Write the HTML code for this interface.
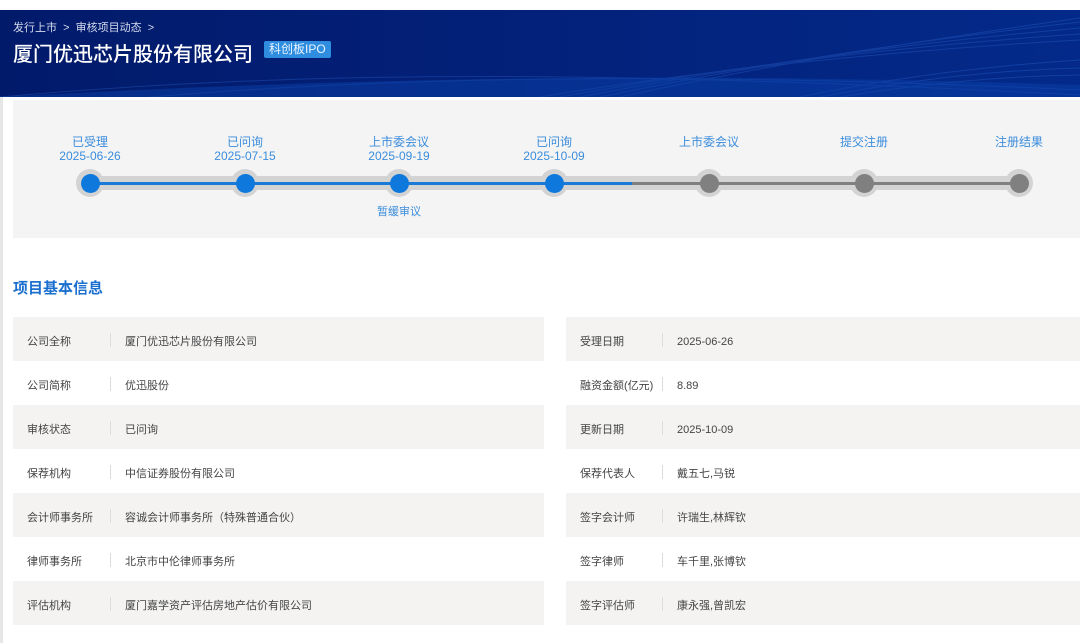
<!DOCTYPE html>
<html><head><meta charset="utf-8"><style>
*{margin:0;padding:0;box-sizing:border-box}
body{width:1080px;height:643px;overflow:hidden;background:#fff;font-family:"Liberation Sans","Noto Sans CJK SC",sans-serif;position:relative}
.hdr{position:absolute;left:0;top:10px;width:1080px;height:87px;background:linear-gradient(90deg,#021a6a 0%,#03217a 50%,#032a8a 100%);overflow:hidden}
.bc{position:absolute;left:13px;top:9px;color:#d6dcef;font-size:11px}
.tt{position:absolute;left:13px;top:28px;color:#fff;font-size:20px;font-weight:500}
.tag{position:absolute;left:264px;top:31px;background:#2f8de0;color:#eaf4ff;font-size:12px;padding:1px 5px;border-radius:2px;height:17px;line-height:15px}
.leftbar{position:absolute;left:0;top:97px;width:3px;height:546px;background:#e6e6e6}
.tl{position:absolute;left:13px;top:100px;width:1067px;height:138px;background:#f4f4f4}
.lb{position:absolute;color:#3b8ddc;font-size:12px;text-align:center;width:100px;line-height:14px}
.band{position:absolute;top:176px;height:14px;background:#d3d3d3}
.ring{position:absolute;width:28px;height:28px;border-radius:50%;background:#d3d3d3;top:169px}
.dot{position:absolute;width:19px;height:19px;border-radius:50%;top:173.5px}
h3{position:absolute;left:13px;top:277px;color:#1a6fcf;font-size:15px;font-weight:bold}
.row{position:absolute;height:44px;font-size:11px;color:#444}
.row span{position:absolute;top:3px;line-height:44px}
.row i{position:absolute;top:16px;width:1px;height:14px;background:#ddd}
.g{background:#f4f3f2}
</style></head><body>
<div class="hdr">
<svg width="1080" height="87" style="position:absolute;left:0;top:0">
<g fill="none" stroke="#2d66d0" stroke-width="1" opacity="0.35">
<path d="M0 87 C300 60 600 60 1080 85"/>
<path d="M150 87 C400 66 700 62 1080 80"/>
<path d="M540 87 C700 60 900 40 1080 30"/>
<path d="M560 87 C720 58 900 36 1080 24"/>
<path d="M580 87 C740 56 900 34 1080 18"/>
<path d="M600 87 C760 54 920 30 1080 12"/>
<path d="M620 87 C780 52 940 28 1080 8"/>
<path d="M800 87 C900 66 1000 55 1080 50"/>
<path d="M820 87 C920 68 1000 60 1080 58"/>
<path d="M840 87 C930 72 1010 66 1080 65"/>
</g>
<path d="M0 87 C300 70 650 60 1080 75 L1080 87 Z" fill="#0a3fa8" opacity="0.5"/>
</svg>
<div class="bc">发行上市 &nbsp;&gt;&nbsp; 审核项目动态 &nbsp;&gt;</div>
<div class="tt">厦门优迅芯片股份有限公司</div>
<div class="tag">科创板IPO</div>
</div>
<div class="leftbar"></div>
<div class="tl"></div>
<div class="band" style="left:90px;width:929px"></div>

<div class="ring" style="left:76px"></div>
<div class="ring" style="left:231px"></div>
<div class="ring" style="left:385px"></div>
<div class="ring" style="left:540px"></div>
<div class="ring" style="left:695px"></div>
<div class="ring" style="left:850px"></div>
<div class="ring" style="left:1005px"></div>
<div style="position:absolute;left:90px;top:181.5px;width:542px;height:3px;background:#1a7ad8"></div>
<div style="position:absolute;left:632px;top:181.5px;width:387px;height:3px;background:#808080"></div>
<div class="dot" style="left:80.5px;background:#0f78dc"></div>
<div class="dot" style="left:235.5px;background:#0f78dc"></div>
<div class="dot" style="left:389.5px;background:#0f78dc"></div>
<div class="dot" style="left:544.5px;background:#0f78dc"></div>
<div class="dot" style="left:699.5px;background:#808080"></div>
<div class="dot" style="left:854.5px;background:#808080"></div>
<div class="dot" style="left:1009.5px;background:#808080"></div>

<div class="lb" style="left:40px;top:135px">已受理<br>2025-06-26</div>
<div class="lb" style="left:195px;top:135px">已问询<br>2025-07-15</div>
<div class="lb" style="left:349px;top:135px">上市委会议<br>2025-09-19</div>
<div class="lb" style="left:504px;top:135px">已问询<br>2025-10-09</div>
<div class="lb" style="left:659px;top:135px">上市委会议</div>
<div class="lb" style="left:814px;top:135px">提交注册</div>
<div class="lb" style="left:969px;top:135px">注册结果</div>
<div class="lb" style="left:349px;top:205px;font-size:11px">暂缓审议</div>

<h3>项目基本信息</h3>

<div class="row g" style="left:13px;top:317px;width:531px"><span style="left:14px">公司全称</span><i style="left:97px"></i><span style="left:112px">厦门优迅芯片股份有限公司</span></div>
<div class="row g" style="left:566px;top:317px;width:514px"><span style="left:14px">受理日期</span><i style="left:96px"></i><span style="left:111px">2025-06-26</span></div>
<div class="row" style="left:13px;top:361px;width:531px"><span style="left:14px">公司简称</span><i style="left:97px"></i><span style="left:112px">优迅股份</span></div>
<div class="row" style="left:566px;top:361px;width:514px"><span style="left:14px">融资金额(亿元)</span><i style="left:96px"></i><span style="left:111px">8.89</span></div>
<div class="row g" style="left:13px;top:405px;width:531px"><span style="left:14px">审核状态</span><i style="left:97px"></i><span style="left:112px">已问询</span></div>
<div class="row g" style="left:566px;top:405px;width:514px"><span style="left:14px">更新日期</span><i style="left:96px"></i><span style="left:111px">2025-10-09</span></div>
<div class="row" style="left:13px;top:449px;width:531px"><span style="left:14px">保荐机构</span><i style="left:97px"></i><span style="left:112px">中信证券股份有限公司</span></div>
<div class="row" style="left:566px;top:449px;width:514px"><span style="left:14px">保荐代表人</span><i style="left:96px"></i><span style="left:111px">戴五七,马锐</span></div>
<div class="row g" style="left:13px;top:493px;width:531px"><span style="left:14px">会计师事务所</span><i style="left:97px"></i><span style="left:112px">容诚会计师事务所（特殊普通合伙）</span></div>
<div class="row g" style="left:566px;top:493px;width:514px"><span style="left:14px">签字会计师</span><i style="left:96px"></i><span style="left:111px">许瑞生,林辉钦</span></div>
<div class="row" style="left:13px;top:537px;width:531px"><span style="left:14px">律师事务所</span><i style="left:97px"></i><span style="left:112px">北京市中伦律师事务所</span></div>
<div class="row" style="left:566px;top:537px;width:514px"><span style="left:14px">签字律师</span><i style="left:96px"></i><span style="left:111px">车千里,张博钦</span></div>
<div class="row g" style="left:13px;top:581px;width:531px"><span style="left:14px">评估机构</span><i style="left:97px"></i><span style="left:112px">厦门嘉学资产评估房地产估价有限公司</span></div>
<div class="row g" style="left:566px;top:581px;width:514px"><span style="left:14px">签字评估师</span><i style="left:96px"></i><span style="left:111px">康永强,曾凯宏</span></div>
</body></html>
